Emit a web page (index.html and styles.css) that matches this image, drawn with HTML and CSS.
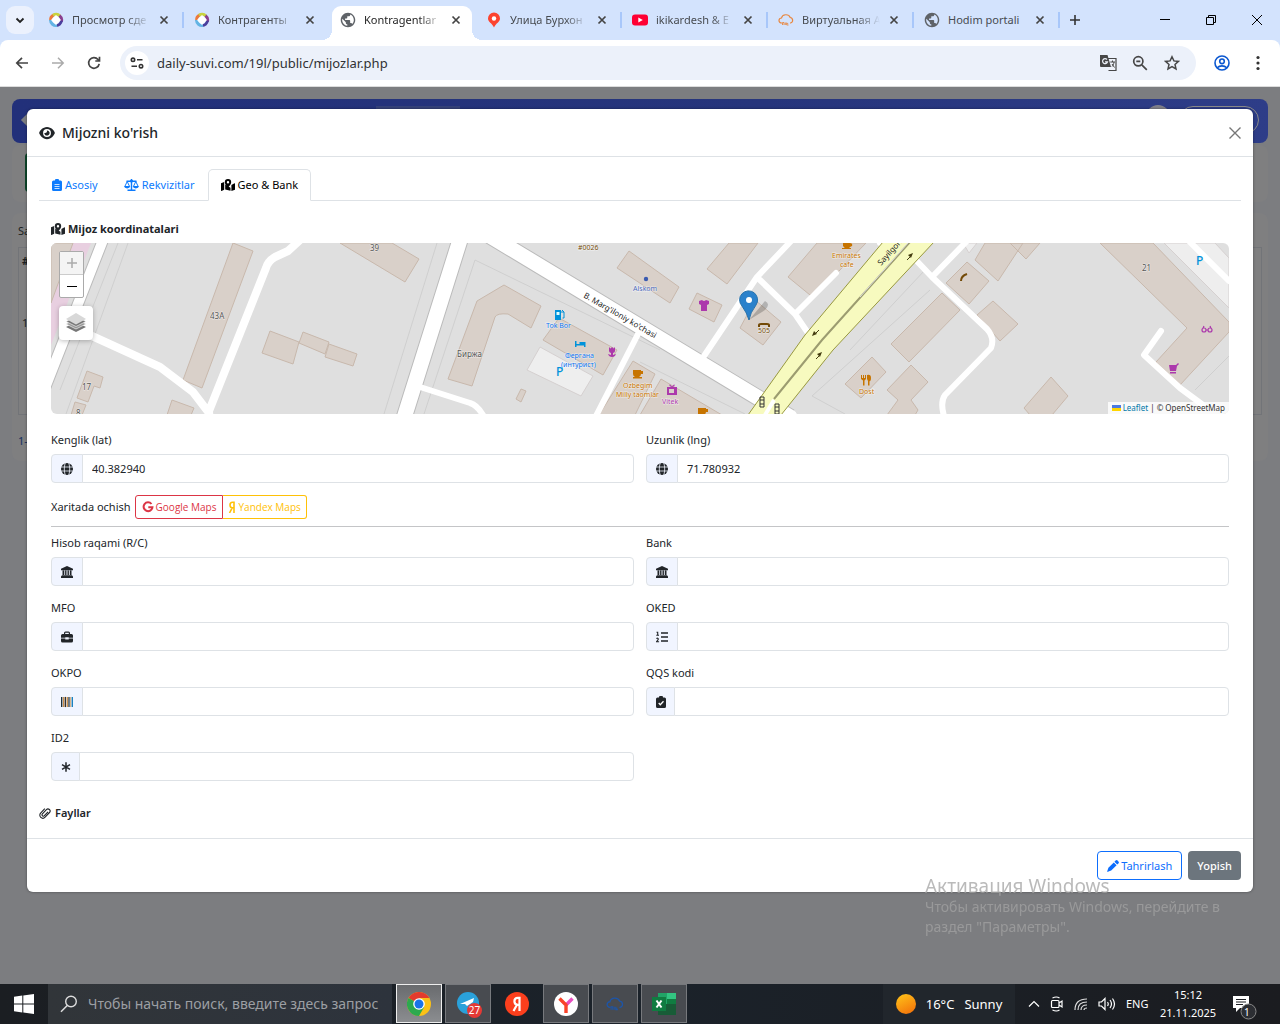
FILE: index.html
```html
<!DOCTYPE html>
<html lang="uz">
<head>
<meta charset="utf-8">
<meta name="viewport" content="width=device-width, initial-scale=1">
<title>Kontragentlar</title>
<link rel="stylesheet" href="styles.css">
</head>
<body>
<svg class="sprite" aria-hidden="true">
  <symbol id="x" viewBox="0 0 10 10"><path d="M1.500 1.500l7 7m0-7l-7 7" stroke="currentColor" stroke-width="1.700" fill="none"/></symbol>
  <symbol id="ring" viewBox="0 0 16 16"><g fill="none" stroke-width="3"><path d="M2.600 8.500A5.600 5.600 0 0 1 6 2.800" stroke="#ec7a3c"/><path d="M5 3.300A5.600 5.600 0 0 1 12 4" stroke="#c8d23e"/><path d="M11.500 3.600A5.600 5.600 0 0 1 13.400 9.500" stroke="#8a3f8f"/><path d="M13.400 8.600A5.600 5.600 0 0 1 8 13.500" stroke="#4a3f9d"/><path d="M9 13.500A5.600 5.600 0 0 1 2.500 8" stroke="#63b4e4"/></g><path d="M8 3L13 8 8 13 3 8z" fill="#fff"/></symbol>
  <symbol id="earth" viewBox="1 1 22 22"><path fill="#5f6368" d="M12 2C6.480 2 2 6.480 2 12s4.480 10 10 10 10-4.480 10-10S17.520 2 12 2zm-1 17.930c-3.950-.490-7-3.850-7-7.930 0-.620.080-1.210.210-1.790L9 15v1c0 1.100.900 2 2 2v1.930zm6.900-2.540c-.260-.810-1-1.390-1.900-1.390h-1v-3c0-.550-.450-1-1-1H8v-2h2c.550 0 1-.450 1-1V7h2c1.100 0 2-.900 2-2v-.410c2.930 1.190 5 4.060 5 7.410 0 2.080-.800 3.970-2.100 5.390z"/></symbol>
  <symbol id="mappin" viewBox="0 0 16 16"><path d="M8 .5a6 6 0 0 0-6 6C2 10 6 11 8 15.500 10 11 14 10 14 6.500a6 6 0 0 0-6-6z" fill="#fc432f"/><circle cx="8" cy="6.500" r="2.200" fill="#fff"/></symbol>
  <symbol id="yt" viewBox="0 0 16 16"><rect y="2.500" width="16" height="11" rx="3" fill="#f03"/><path d="M6.300 5.500v5L10.800 8z" fill="#fff"/></symbol>
  <symbol id="cloud" viewBox="0 0 16 16"><path d="M4 11H3.500a2.500 2.500 0 0 1 0-5 4.500 4 0 0 1 8.700-.5 2.800 2.800 0 0 1 .3 5.500H12" stroke="currentColor" stroke-width="1.200" fill="none"/><path d="M4.500 13v-2.500h1.500v2.500M7.300 13v-2.500M8.700 10.500v2.500h1.800M8.700 11.700h1.500" stroke="currentColor" stroke-width=".9" fill="none"/></symbol>
  <symbol id="eye" viewBox="0 0 576 512"><path fill="currentColor" d="M288 32c-80.800 0-145.500 36.800-192.600 80.600C48.600 156 17.300 208 2.500 243.700c-3.300 7.900-3.300 16.700 0 24.600C17.300 304 48.600 356 95.400 399.400C142.500 443.200 207.200 480 288 480s145.500-36.800 192.600-80.600c46.800-43.500 78.100-95.400 93-131.100c3.300-7.900 3.300-16.700 0-24.600c-14.900-35.700-46.200-87.700-93-131.100C433.500 68.800 368.800 32 288 32zM144 256a144 144 0 1 1 288 0 144 144 0 1 1 -288 0zm144-64c0 35.300-28.700 64-64 64c-7.100 0-13.900-1.200-20.300-3.300c-5.500-1.800-11.900 1.600-11.700 7.400c.3 6.900 1.300 13.800 3.200 20.700c13.700 51.200 66.400 81.600 117.600 67.900s81.600-66.400 67.900-117.600c-11.100-41.500-47.800-69.400-88.600-71.100c-5.800-.2-9.200 6.100-7.400 11.700c2.100 6.400 3.300 13.200 3.300 20.300z"/></symbol>
  <symbol id="clip" viewBox="0 0 10 12"><path fill="currentColor" fill-rule="evenodd" d="M1.500 1.500H3a2 2 0 0 1 4 0h1.500A1.500 1.500 0 0 1 10 3v7.500A1.500 1.500 0 0 1 8.500 12h-7A1.500 1.500 0 0 1 0 10.500V3a1.500 1.500 0 0 1 1.500-1.500zM2.500 5.300v.7h5v-.7zm0 2v.7h5v-.7zm0 2v.7h5v-.7z"/></symbol>
  <symbol id="clipcheck" viewBox="0 0 10 12"><path fill="currentColor" d="M1.500 1.500H3a2 2 0 0 1 4 0h1.500A1.500 1.500 0 0 1 10 3v7.500A1.500 1.500 0 0 1 8.500 12h-7A1.500 1.500 0 0 1 0 10.500V3a1.500 1.500 0 0 1 1.500-1.500z"/><path d="M2.700 7l1.600 1.700L7.500 5.300" fill="none" stroke="#fff" stroke-width="1.300"/></symbol>
  <symbol id="scale" viewBox="0 0 15 12"><path d="M7.500 0v11M2.500 2.200h10M3.500 11.200h8" stroke="currentColor" stroke-width="1.400" fill="none"/><path d="M3.200 2.500L.8 7.500h4.800zM11.800 2.500L9.400 7.500h4.800z" fill="none" stroke="currentColor"/><path d="M0 7.300h6.300a3.200 2.600 0 0 1-6.300 0zM8.700 7.300H15a3.200 2.600 0 0 1-6.300 0z" fill="currentColor"/><circle cx="7.500" cy="2" r="1.600" fill="currentColor"/></symbol>
  <symbol id="maploc" viewBox="0 0 14 12"><path fill="currentColor" d="M0 4.200L3.200 2.900v7.800L.5 12 0 11.700zM4.200 5.500l5.300 3.200v3.100L4.200 10.500zM10.400 6l3.100-1.700.5.300v6.200L10.400 12z"/><path fill="currentColor" fill-rule="evenodd" d="M7 0a3.200 3.200 0 0 0-3.200 3.200C3.800 5 6 7.500 7 8.600c1-1.100 3.200-3.600 3.200-5.400A3.200 3.200 0 0 0 7 0zm0 2a1.200 1.200 0 1 1 0 2.400A1.200 1.200 0 0 1 7 2z"/></symbol>
  <symbol id="globe" viewBox="0 0 12 12"><circle cx="6" cy="6" r="6" fill="currentColor"/><path d="M0 4h12M0 8h12M4.200 0C3 4 3 8 4.200 12M7.800 0C9 4 9 8 7.800 12" stroke="#eff3fd" stroke-width=".8" fill="none"/></symbol>
  <symbol id="bank" viewBox="0 0 12 12"><path fill="currentColor" d="M6 0l6 2.800v1.400H0V2.800zM1.500 4.500h1.800V9H1.500zm2.600 0h1.400V9H4.100zm2.400 0h1.400V9H6.500zm2.300 0h1.700V9H8.800zM1 9.200h10l1 1.300V12H0v-1.500z"/></symbol>
  <symbol id="case" viewBox="0 0 12 12"><path fill="currentColor" fill-rule="evenodd" d="M3 3V2a1.500 1.500 0 0 1 1.500-1.500h3A1.500 1.500 0 0 1 9 2v1h1.500A1.500 1.500 0 0 1 12 4.500V6.800H7.700V6.300H4.300v.5H0V4.500A1.500 1.500 0 0 1 1.500 3zm1.200 0h3.600V1.700H4.200zM0 7.400h4.300v1h3.400v-1H12V10a1.500 1.500 0 0 1-1.500 1.500h-9A1.500 1.500 0 0 1 0 10z"/></symbol>
  <symbol id="listol" viewBox="0 0 12 12"><path d="M5 2h7M5 6h7M5 10h7" stroke="currentColor" stroke-width="1.300"/><path d="M.5 1.200h1.200v3M.3 4.200h2.700M.4 7.600c1.200-1 2.600.2 1.400 1.400L.6 10.700h2.500" fill="none" stroke="currentColor" stroke-width="1.100"/></symbol>
  <symbol id="barcode" viewBox="0 0 13 12"><path fill="#1d2f38" d="M0 .5h1.500v11H0zM8 .5h1.300v11H8z"/><path fill="#c8812f" d="M2.300.5h1.200v11H2.300zM6.200.5h1.200v11H6.200z"/><path fill="#333" d="M4 .5h1.500v11H4z"/><path fill="#d5a56a" d="M10 .5h1v11h-1z"/><path fill="#1a82c0" d="M11.500.5H13v11h-1.500z"/></symbol>
  <symbol id="aster" viewBox="0 0 12 12"><path d="M6 1.300v9.400M2 3.700l8 4.600M10 3.700L2 8.300" stroke="currentColor" stroke-width="1.500"/></symbol>
  <symbol id="paperclip" viewBox="0 0 12 12"><path d="M9 4.800L5.400 8.700a1.300 1.300 0 0 1-2-1.800l4-4.300a2.100 2.100 0 0 1 3.100 2.900L6.100 10.200a3 3 0 0 1-4.500-4.100L5.800 1.700" fill="none" stroke="currentColor" stroke-width="1.100"/></symbol>
  <symbol id="pencil" viewBox="0 0 12 12"><path fill="currentColor" d="M8.600.6a1.400 1.400 0 0 1 2 0l.8.800a1.400 1.400 0 0 1 0 2l-1.200 1.200-2.800-2.800zM6.800 2.400l2.800 2.800-5.400 5.400L0 12l1.400-4.200z"/></symbol>
  <symbol id="gmark" viewBox="0 0 12 12"><path d="M9.500 3A4.400 4.400 0 1 0 10.400 6.300H6.300" fill="none" stroke="currentColor" stroke-width="2"/></symbol>
  <symbol id="yamark" viewBox="0 0 8 12"><path d="M6 12V1.200H4.500a2.500 2.800 0 0 0 0 5.600H6M4.200 6.800L1.500 12" fill="none" stroke="currentColor" stroke-width="1.600"/></symbol>
</svg>

<header class="browser">
  <div class="tabstrip">
    <button class="tab-search" aria-label="Tabs"><svg viewBox="0 0 12 12" width="12" height="12"><path d="M2.500 4.500L6 8l3.500-3.500" stroke="#222" stroke-width="1.800" fill="none"/></svg></button>
    <div class="tab"><div class="tab-body"><svg class="fav"><use href="#ring"/></svg><span class="tab-title">Просмотр сде</span><button class="tab-close" aria-label="Close"><svg><use href="#x"/></svg></button></div></div>
    <div class="tab before-active"><div class="tab-body"><svg class="fav"><use href="#ring"/></svg><span class="tab-title">Контрагенты</span><button class="tab-close" aria-label="Close"><svg><use href="#x"/></svg></button></div></div>
    <div class="tab active"><div class="tab-body"><svg class="fav"><use href="#earth"/></svg><span class="tab-title">Kontragentlar</span><button class="tab-close" aria-label="Close"><svg><use href="#x"/></svg></button></div></div>
    <div class="tab"><div class="tab-body"><svg class="fav"><use href="#mappin"/></svg><span class="tab-title">Улица Бурхон</span><button class="tab-close" aria-label="Close"><svg><use href="#x"/></svg></button></div></div>
    <div class="tab"><div class="tab-body"><svg class="fav"><use href="#yt"/></svg><span class="tab-title">ikikardesh &amp; E</span><button class="tab-close" aria-label="Close"><svg><use href="#x"/></svg></button></div></div>
    <div class="tab"><div class="tab-body"><svg class="fav orange"><use href="#cloud"/></svg><span class="tab-title">Виртуальная А</span><button class="tab-close" aria-label="Close"><svg><use href="#x"/></svg></button></div></div>
    <div class="tab"><div class="tab-body"><svg class="fav"><use href="#earth"/></svg><span class="tab-title whole">Hodim portali</span><button class="tab-close" aria-label="Close"><svg><use href="#x"/></svg></button></div></div>
    <button class="new-tab" aria-label="New tab"><svg viewBox="0 0 12 12" width="12" height="12"><path d="M6 1v10M1 6h10" stroke="#333" stroke-width="1.600"/></svg></button>
    <div class="window-buttons">
      <button aria-label="Minimize"><svg viewBox="0 0 12 12" width="12" height="12"><path d="M1 5.500h10" stroke="#000"/></svg></button>
      <button aria-label="Restore"><svg viewBox="0 0 12 12" width="12" height="12"><path d="M1.500 3.500h7v7h-7zM3.500 3V1.500h7v7H9" stroke="#000" fill="none"/></svg></button>
      <button aria-label="Close window"><svg viewBox="0 0 12 12" width="12" height="12"><path d="M1 1l10 10M11 1L1 11" stroke="#000"/></svg></button>
    </div>
  </div>
  <div class="toolbar">
    <button class="nav" aria-label="Back"><svg viewBox="0 0 14 14" width="14" height="14"><path d="M13 7H2M7 1.800L1.800 7 7 12.200" stroke="#444" stroke-width="1.700" fill="none"/></svg></button>
    <button class="nav" aria-label="Forward"><svg viewBox="0 0 14 14" width="14" height="14"><path d="M1 7h11M7 1.800L12.200 7 7 12.200" stroke="#aaa" stroke-width="1.500" fill="none"/></svg></button>
    <button class="nav" aria-label="Reload"><svg viewBox="0 0 14 14" width="14" height="14"><path d="M12.200 7.800A5.300 5.300 0 1 1 11 3.500L12.500 5M12.500.8V5H8.300" stroke="#444" stroke-width="1.700" fill="none"/></svg></button>
    <div class="omnibox">
      <button class="site-info" aria-label="Site"><svg viewBox="0 0 14 14" width="14" height="14"><g stroke="#333" stroke-width="1.600" fill="none"><circle cx="3" cy="3.800" r="1.700"/><path d="M7 3.800h5.500M1.500 10.200H7"/><circle cx="11" cy="10.200" r="1.700"/></g></svg></button>
      <input class="url" type="text" aria-label="Address" value="daily-suvi.com/19l/public/mijozlar.php">
      <button class="omni" aria-label="Translate"><svg viewBox="0 0 18 18" width="18" height="18"><path d="M8.500 4.500H17v12H9.500" fill="#eef2fa" stroke="#474747" stroke-width="1.200"/><path d="M1 1h7.500l3.500 12H2a1 1 0 0 1-1-1z" fill="#474747"/><path d="M8 5.500a2.500 2.500 0 1 0 .5 2.300H6" fill="none" stroke="#eef2fa" stroke-width="1.200"/><path d="M11.300 8H16M13.500 6.500V8M15 8c-.3 2.500-1 3.500-2 4.500M13 10l2.500 3.500" fill="none" stroke="#474747"/></svg></button>
      <button class="omni" aria-label="Zoom"><svg viewBox="0 0 16 16" width="16" height="16"><circle cx="6.300" cy="6.300" r="4.600" stroke="#474747" stroke-width="1.700" fill="none"/><path d="M9.800 9.800l5 5M4.300 6.300h4" stroke="#474747" stroke-width="1.700"/></svg></button>
      <button class="omni" aria-label="Bookmark"><svg viewBox="0 0 16 16" width="16" height="16"><path d="M8 1.800l1.900 4.100 4.500.5L11 9.400l1 4.500-4-2.300-4 2.300 1-4.500-3.400-3 4.500-.5z" stroke="#474747" stroke-width="1.500" fill="none"/></svg></button>
    </div>
    <button class="nav" aria-label="Profile"><svg viewBox="0 0 16 16" width="16" height="16"><g stroke="#0b57d0" stroke-width="1.600" fill="none"><circle cx="8" cy="8" r="7"/><circle cx="8" cy="6.300" r="2.300"/><path d="M3.200 12.800c2.500-2.600 7-2.600 9.600 0"/></g></svg></button>
    <button class="nav" aria-label="Menu"><svg viewBox="0 0 16 16" width="16" height="16"><g fill="#333"><circle cx="8" cy="2.500" r="1.600"/><circle cx="8" cy="8" r="1.600"/><circle cx="8" cy="13.500" r="1.600"/></g></svg></button>
  </div>
</header>

<main class="page">
  <div class="under" aria-hidden="true">
    <div class="under-bar"><span class="under-home"></span><span class="under-tab"></span><span class="under-avatar"></span><span class="under-pill"></span></div>
    <div class="under-card"><span class="under-green"></span></div>
    <div class="under-card list"><p>Sa</p><div class="under-table"><b>#</b><span>1</span></div><p class="pager">1-</p></div>
  </div>

  <section class="modal" role="dialog" aria-labelledby="dialog-title">
    <div class="modal-header">
      <svg class="i-eye"><use href="#eye"/></svg>
      <h1 id="dialog-title">Mijozni ko'rish</h1>
      <button class="modal-close" aria-label="Close"><svg viewBox="0 0 12 12" width="12" height="12"><path d="M.5.5l11 11M11.500.5l-11 11" stroke="#777" stroke-width="1.400"/></svg></button>
    </div>
    <div class="modal-body">
      <nav class="nav-tabs">
        <a href="#asosiy"><svg class="i10"><use href="#clip"/></svg>Asosiy</a>
        <a href="#rekvizitlar"><svg class="i15"><use href="#scale"/></svg>Rekvizitlar</a>
        <a href="#geo" class="active"><svg class="i14"><use href="#maploc"/></svg>Geo &amp; Bank</a>
      </nav>
      <div class="panel">
        <h2><svg class="i14"><use href="#maploc"/></svg>Mijoz koordinatalari</h2>
        <div class="map">
          <svg class="map-art" viewBox="51 243 1178 171" preserveAspectRatio="xMidYMid slice" role="img" aria-label="Xarita">
            <rect x="51" y="243" width="1178" height="171" fill="#dfdfdf"/>
            <path fill="#e8cfe0" d="M73 243h18L51 345v-42z"/>
            <g fill="none" stroke="#cfcfcf">
              <path d="M128 243L66 414M437 243L384 414M424 414L475 260 660 350M640 362L745 414M812 396L930 290M812 396L845 414M1229 356L1195 390M850 350L925 270M118 243L60 390"/>
            </g>
            <g fill="#d9d0c9" stroke="#c8b8ac">
              <path d="M51 243H73L51 303zM233 243L253 251 202 388 183 380zM270 331L299 342 293 364 262 353zM303 332L329 342 325 354 299 343zM329 344L357 354 353 366 325 357zM87 371L103 377 100 388 94 386 88 402 77 398zM75 402L86 405 82 415H71zM172 400L194 408 191 415H167zM340 243H392L419 259 405 282z"/>
              <path d="M504 285L541 306 531 328 508 314Q497 313 495 317L472 386 448 379 477 301zM559 318L617 350 603 375 543 340zM633 361L655 374 635 415H599zM521 389L526 391 521 402 516 399zM629 251L679 287 670 303 617 268zM661 379L722 415H640z"/>
              <path d="M729 243H758L727 284 707 269zM697 293L722 305 714 322 689 309zM755 300L781 322 763 345 740 328zM817 243H866L838 272 810 295 788 277zM942 293L960 310 909 362 891 344zM872 357L886 372 861 398 845 384zM911 365L928 382 911 400 918 410 915 415H887L898 400 887 390zM967 262L989 281 969 304 946 283zM985 243H1023L998 281 975 260zM1010 243H1040L1026 259zM993 301L1018 324 1000 341 977 315zM1051 377L1068 396 1052 415H1030L1024 408zM1100 243H1153L1229 322V332L1180 385 1156 362 1187 328z"/>
            </g>
            <path fill="#eee" stroke="#d5d0d0" d="M540 347L593 376 581 396 527 370zM1164 243H1215L1229 258V308zM963 243h14l-8 10z"/>
            <g fill="none" stroke="#bbb" stroke-linejoin="round">
              <path stroke-width="12" d="M103 240L45 388"/><path stroke-width="17" d="M460 240L404 418M490 236L790 417"/>
            </g>
            <g fill="none" stroke="#fff" stroke-linejoin="round" stroke-linecap="round">
              <path stroke-width="10" d="M103 240L45 388"/>
              <path stroke-width="8" d="M300 240L288 251 275 257Q268 261 266 268L209 411M92 336L160 367 193 392 209 413"/>
              <path stroke-width="15" d="M460 240L404 418M490 236L790 417"/>
              <path stroke-width="6" d="M420 387L470 403Q477 405 483 415M1188 240L1229 281"/>
              <path stroke-width="6" d="M638 334L595 418M792 240L757 277 704 356M760 280L795 314 808 333M796 313L836 273M880 243L890 250M912 256L932 277 987 329Q995 338 991 348L945 395Q940 402 944 416M967 241L932 277M1161 331L1144 355 1180 388 1203 405"/>
            </g>
            <path fill="#f7fabf" stroke="#98983f" d="M883 242L805 335 748 415H781L833 350 934 242z"/>
            <path fill="none" stroke="#9c9c70" stroke-width="2" d="M910 242L822 340 774 399"/>
            <path fill="none" stroke="#ddd" d="M908 243L860 297"/>
            <path fill="none" stroke="#fff" stroke-width="4" d="M774 400L765 415"/>
            <g fill="#443c10" stroke="#443c10"><path d="M819 330l-4 4"/><path stroke="none" d="M812 336l2-5 3 3z"/><path d="M816 359l4-4"/><path stroke="none" d="M822 352l-2 5-3-3z"/><path d="M907 260l4-4"/><path stroke="none" d="M913 253l-2 5-3-3z"/></g>
            <g fill="none" stroke="#333"><path d="M760 397h4v10h-4zM760 400h4M760 404h4M775 404h4v10h-4zM775 407h4M775 411h4"/></g>
            <g class="halo"><text x="210" y="319">43A</text><text x="82" y="390">17</text><text x="76" y="416">8</text><text x="370" y="251">39</text><text x="457" y="357">Биржа</text><text x="1142" y="271">21</text></g>
            <text class="street" transform="translate(583 297) rotate(30)">B. Marg'iloniy ko'chasi</text>
            <text class="street" transform="translate(881 266) rotate(-48)">Sayilgoh</text>
            <g class="halo brown"><text x="578" y="250">#0026</text><text x="758" y="333">505</text></g>
            <g class="halo blue"><text x="546" y="328">Tok Bor</text><text x="565" y="358">Фергана</text><text x="561" y="367">(интурист)</text></g>
            <g class="halo navy"><text x="633" y="291">Alskom</text></g>
            <g class="halo amber"><text x="832" y="258">Emirates</text><text x="840" y="267">cafe</text><text x="623" y="388">Ozbegim</text><text x="616" y="397">Milly taomlar</text><text x="859" y="394">Dost</text></g>
            <g class="halo violet"><text x="662" y="404">Vitek</text></g>
            <g class="parking"><text x="556" y="376">P</text><text x="1196" y="265">P</text></g>
            <circle cx="646" cy="279" r="2.200" fill="#3b5bb0"/>
            <path fill="#0092da" d="M555 310h6v10h-6zM575 341h1.500v3h3v-2h6v5h-1.500v-1.500h-7.500V347H575z"/><path d="M561 312h3v6h-1.500M562 310l2 2" stroke="#0092da" fill="none"/><path fill="#dff" d="M556.500 312h3v3h-3z"/>
            <g fill="#ac39ac"><path d="M699 301l3-1q2 2 4 0l3 1v3l-2 1v6h-6v-6l-2-1z"/><path d="M609 347l1.500 1.500L612 347l1.500 1.500L615 347v4q0 1.500-2 2v2l3-1q-1 3-4 3t-4-3l3 1v-2q-2-.5-2-2z"/><path fill-rule="evenodd" d="M667 387h4l-2-2 1-.5 2 2 2-2 1 .5-2 2h4v8h-10zm2 2v4h5v-4z"/><path d="M1169 365h7l2-2 1 1-2 2-1 5h-6zM1170 372h6v1.500h-6z"/></g>
            <path fill="none" stroke="#ac39ac" stroke-width="1.200" d="M1202 330a2 2 0 1 0 4 0 2 2 0 1 0-4 0M1208 330a2 2 0 1 0 4 0 2 2 0 1 0-4 0M1206 330h2M1203 328l1-2M1211 328l-1-2"/>
            <g fill="#c77400"><path d="M843 243h7q3 0 2 3l-2 1q-1 2-3 2t-4-3zM842 248h9v1h-9zM633 370h8v1h2v3h-2q0 2-2 3h-4q-2-1-2-3zM633 377h9v1.500h-9zM698 408h8v1h2v3h-2l-1 3h-7z"/><path d="M861 375h1v3h1v-3h1v3h1v-3h1v4l-1.500 1.500v5h-1.500v-5L861 379zM867 375q4-1 4 3t-1.500 3v4.500H868V381q-1.500-2-1-6z"/></g>
            <path d="M759 327v-2q0-1 2-1h6q2 0 2 1v2M961 281q0-5 6-7" fill="none" stroke="#734a08" stroke-width="2"/>
            <path d="M749 320L765 301Q771 304 765 310z" fill="#000" opacity=".2"/>
            <path d="M749 320Q747 313 742 306a9 9 0 1 1 14-1Q750 313 749 320z" fill="#2a81cb" stroke="#2872ab"/><circle cx="749" cy="300" r="3" fill="#fff"/>
          </svg>
          <div class="map-controls">
            <div class="zoomers"><button disabled aria-label="Zoom in"><svg viewBox="0 0 12 12" width="12" height="12"><path d="M6 1v10M1 6h10" stroke="#aaa" stroke-width="1.500"/></svg></button><button aria-label="Zoom out"><svg viewBox="0 0 12 12" width="12" height="12"><path d="M1 6.500h10" stroke="#000"/></svg></button></div>
            <button class="layers" aria-label="Layers"><svg viewBox="0 0 24 24" width="24" height="24"><path d="M2 16l10 5 10-5-10-5z" fill="#777"/><path d="M2 13l10 5 10-5-10-5z" fill="#999" stroke="#fff" stroke-width=".6"/><path d="M2 10.500l10 5 10-5-10-5z" fill="#777" stroke="#fff" stroke-width=".6"/><path d="M2 8l10 5.500L22 8 12 2z" fill="#d8d8d8"/></svg></button>
          </div>
          <div class="attribution"><svg viewBox="0 0 12 8" width="9" height="6"><path fill="#4c7be1" d="M0 0h12v4H0z"/><path fill="#ffd500" d="M0 4h12v4H0z"/></svg> <a href="#leaflet">Leaflet</a> | © OpenStreetMap</div>
        </div>

        <div class="grid first">
          <div class="field"><label for="lat">Kenglik (lat)</label><div class="group"><span class="addon"><svg><use href="#globe"/></svg></span><input id="lat" type="text" value="40.382940"></div></div>
          <div class="field"><label for="lng">Uzunlik (lng)</label><div class="group"><span class="addon"><svg><use href="#globe"/></svg></span><input id="lng" type="text" value="71.780932"></div></div>
        </div>
        <div class="open-map"><span>Xaritada ochish</span><div class="btn-group"><a class="google" href="#google"><svg class="i12"><use href="#gmark"/></svg>Google Maps</a><a class="yandex" href="#yandex"><svg class="i8"><use href="#yamark"/></svg>Yandex Maps</a></div></div>
        <hr>
        <div class="grid">
          <div class="field"><label for="rc">Hisob raqami (R/C)</label><div class="group"><span class="addon"><svg><use href="#bank"/></svg></span><input id="rc" type="text"></div></div>
          <div class="field"><label for="bankname">Bank</label><div class="group"><span class="addon"><svg><use href="#bank"/></svg></span><input id="bankname" type="text"></div></div>
          <div class="field"><label for="mfo">MFO</label><div class="group"><span class="addon"><svg><use href="#case"/></svg></span><input id="mfo" type="text"></div></div>
          <div class="field"><label for="oked">OKED</label><div class="group"><span class="addon"><svg><use href="#listol"/></svg></span><input id="oked" type="text"></div></div>
          <div class="field"><label for="okpo">OKPO</label><div class="group"><span class="addon"><svg><use href="#barcode"/></svg></span><input id="okpo" type="text"></div></div>
          <div class="field"><label for="qqs">QQS kodi</label><div class="group"><span class="addon narrow"><svg><use href="#clipcheck"/></svg></span><input id="qqs" type="text"></div></div>
          <div class="field"><label for="id2">ID2</label><div class="group"><span class="addon narrow"><svg><use href="#aster"/></svg></span><input id="id2" type="text"></div></div>
        </div>
      </div>
      <h3><svg class="i12"><use href="#paperclip"/></svg>Fayllar</h3>
    </div>
    <div class="modal-footer">
      <button class="btn-edit"><svg class="i12"><use href="#pencil"/></svg>Tahrirlash</button>
      <button class="btn-close">Yopish</button>
    </div>
  </section>
  <div class="watermark"><strong>Активация Windows</strong><span>Чтобы активировать Windows, перейдите в<br>раздел "Параметры".</span></div>
</main>

<footer class="taskbar">
  <button class="start" aria-label="Start"><svg viewBox="0 0 20 20" width="20" height="20"><path fill="#fff" d="M0 2.800l8.300-1.200v7.900H0zM9.300 1.400L20 0v9.500H9.300zM0 10.500h8.300v7.900L0 17.200zM9.300 10.500H20V20L9.300 18.600z"/></svg></button>
  <label class="search"><svg viewBox="0 0 18 18" width="18" height="18"><circle cx="11" cy="6.500" r="5.300" fill="none" stroke="#ddd" stroke-width="1.400"/><path d="M7.200 10.500L1 16.800" stroke="#ddd" stroke-width="1.500"/></svg><input type="text" aria-label="Поиск" placeholder="Чтобы начать поиск, введите здесь запрос"></label>
  <div class="apps">
    <button class="app current" aria-label="Chrome"><svg viewBox="0 0 24 24" width="24" height="24"><circle cx="12" cy="12" r="12" fill="#fbc116"/><path d="M12 12L1.600 6A12 12 0 0 1 22.400 6z" fill="#e33b2e"/><path d="M12 12L1.600 6A12 12 0 0 0 12 24l5.200-9z" fill="#2da94f"/><path d="M12 6h10.400L17.200 15z" fill="#fbc116"/><circle cx="12" cy="12" r="5.800" fill="#fff"/><circle cx="12" cy="12" r="4.500" fill="#1a73e8"/></svg></button>
    <button class="app open" aria-label="Telegram"><svg viewBox="0 0 24 24" width="24" height="24"><circle cx="12" cy="11" r="11" fill="#2aa1da"/><path d="M4 12L18 6l-1 4-6 4-2-2z" fill="#fff"/></svg><span class="count">27</span></button>
    <button class="app" aria-label="Yandex"><svg viewBox="0 0 24 24" width="24" height="24"><circle cx="12" cy="12" r="12" fill="#fc3f1d"/><path d="M14.500 19V5.800H12.800c-4.500 0-4.500 7 0 7h1.700M12 12.800L8.500 19" fill="none" stroke="#fff" stroke-width="2.200"/></svg></button>
    <button class="app open" aria-label="Yandex Browser"><svg viewBox="0 0 24 24" width="24" height="24"><circle cx="12" cy="12" r="12" fill="#fff"/><path d="M12 13l6.500-6.500" stroke="#e84fc0" stroke-width="3.400"/><path d="M12 21v-8L5.500 6.500" fill="none" stroke="#f9432a" stroke-width="3.400"/></svg></button>
    <button class="app open" aria-label="Cloud"><svg class="blue-cloud" width="18" height="18"><use href="#cloud"/></svg></button>
    <button class="app open" aria-label="Excel"><svg viewBox="0 0 24 24" width="24" height="24"><path fill="#21a366" d="M6 1h9v11H6z"/><path fill="#33c481" d="M15 1h9v6h-9z"/><path fill="#107c41" d="M15 7h9v5h-9z"/><path fill="#185c37" d="M6 12h18v11H6z"/><path fill="#107c41" d="M0 5h14v14H0z"/><path d="M4.500 8.500l5 7M9.500 8.500l-5 7" stroke="#fff" stroke-width="2"/></svg></button>
  </div>
  <button class="weather"><svg viewBox="0 0 20 20" width="20" height="20"><defs><linearGradient id="sun" x1="0" y1="0" x2=".5" y2="1"><stop stop-color="#ffc61a"/><stop offset="1" stop-color="#f47b0c"/></linearGradient></defs><circle cx="10" cy="10" r="10" fill="url(#sun)"/></svg><span>16°C</span><span>Sunny</span></button>
  <div class="tray">
    <svg viewBox="0 0 12 12" width="12" height="12"><path d="M1 8.500l5-5 5 5" fill="none" stroke="#fff" stroke-width="1.200"/></svg>
    <svg viewBox="0 0 14 16" width="14" height="16"><g fill="none" stroke="#fff" stroke-width="1.200"><rect x="1.500" y="4.500" width="7.500" height="7" rx="1"/><path d="M9 7l3-2v6L9 9M2.500 2q4-2 7 0M2.500 14q4 2 7 0"/></g></svg>
    <svg viewBox="0 0 14 14" width="14" height="14"><g fill="none" stroke="#ddd" stroke-width="1.200"><path d="M1 13Q1 2 13 2M4 13q0-8 9-8M7 13q0-5 6-5"/><path d="M10 13q0-2 3-2"/></g></svg>
    <svg viewBox="0 0 18 14" width="18" height="14"><g fill="none" stroke="#fff" stroke-width="1.200"><path d="M1 5h2.500L7 1.500v11L3.500 9H1zM9.500 5q1.500 2 0 4M12 3q3 4 0 8M14.500 1.500q4 5.500 0 11"/></g></svg>
    <span>ENG</span>
  </div>
  <div class="clock"><span>15:12</span><span>21.11.2025</span></div>
  <button class="notes" aria-label="Notifications"><svg viewBox="0 0 26 26" width="26" height="26"><path fill="#fff" d="M1 2h16v12H8l-4 4v-4H1z"/><path d="M4 5.500h10M4 8h10M4 10.500h7" stroke="#1c1e22"/><circle cx="16.500" cy="17.500" r="7.500" fill="#2c2e33" stroke="#888"/></svg><span>1</span></button>
</footer>
</body>
</html>
```
FILE: styles.css
```css
* { box-sizing: border-box; }
body { margin: 0; min-height: 100vh; display: flex; flex-direction: column; font: 11px/20px "Noto Sans", "Open Sans", sans-serif; color: #212529; background: #7c7d80; }
button, input { font: inherit; color: inherit; }
button { padding: 0; border: 0; background: none; display: flex; align-items: center; justify-content: center; }
a { text-decoration: none; }
h1, h2, h3, p { margin: 0; }
.sprite { display: none; }

/* browser frame */
.browser { background: #d3e3fd; }
.tabstrip { display: flex; height: 40px; align-items: flex-start; }
.tab-search { width: 28px; height: 28px; margin: 6px 4px 0 6px; border-radius: 9px; background: #ebf1fd; flex: none; }
.tab { flex: 0 1 146px; min-width: 0; height: 40px; padding: 6px 4px 0 2px; position: relative; }
.tab::after { content: ""; position: absolute; right: 0; top: 12px; width: 2px; height: 16px; background: #a8c7fa; }
.tab.before-active::after { display: none; }
.tab-body { height: 34px; display: flex; align-items: center; padding: 0 11px 6px 8px; }
.fav { width: 16px; height: 16px; flex: none; }
.orange { color: #e8873f; }
.tab-title { flex: 1; margin: 0 2px 0 8px; white-space: nowrap; color: #474b50; -webkit-mask-image: linear-gradient(to right, #000 55px, transparent 78px); mask-image: linear-gradient(to right, #000 55px, transparent 78px); }
.tab-title.whole { -webkit-mask-image: none; mask-image: none; }
.tab-close { width: 10px; height: 10px; color: #444; }
.tab-close svg { width: 10px; height: 10px; }
.active .tab-body { background: #fff; border-radius: 9px 9px 0 0; position: relative; }
.tab.active::after { display: none; }
.active .tab-title { color: #1f1f1f; }
.active .tab-body::before, .active .tab-body::after { content: ""; position: absolute; bottom: 0; width: 10px; height: 10px; }
.active .tab-body::before { right: 100%; background: radial-gradient(circle at 0 0, transparent 10px, #fff 10px); }
.active .tab-body::after { left: 100%; background: radial-gradient(circle at 100% 0, transparent 10px, #fff 10px); }
.new-tab { width: 30px; height: 40px; flex: none; }
.window-buttons { margin-left: auto; display: flex; }
.window-buttons button { width: 46px; height: 40px; }
.toolbar { height: 47px; background: #fff; border-radius: 8px 8px 0 0; border-bottom: 1px solid #dcdcdc; display: flex; align-items: center; padding: 0 4px; }
.nav { width: 36px; height: 34px; flex: none; }
.omnibox { flex: 1; height: 34px; border-radius: 17px; background: #ecf1fa; display: flex; align-items: center; margin: 0 8px; padding: 0 8px 0 5px; }
.site-info { width: 24px; height: 24px; border-radius: 12px; background: #fff; }
.url { flex: 1; min-width: 0; border: 0; background: none; padding: 0 0 0 8px; font-size: 13px; color: #303134; }
.omni { width: 32px; height: 32px; }

/* dimmed page below the dialog */
.page { flex: 1; position: relative; padding: 22px 27px 92px; }
.under { position: absolute; inset: 12px 12px auto; color: #1c1f22; }
.under-bar { height: 44px; border-radius: 8px; background: linear-gradient(90deg, #22307a, #26357c 60%, #2e3d88); position: relative; }
.under-home { position: absolute; left: 11px; top: 16px; width: 10px; height: 10px; background: #7c7d80; transform: rotate(45deg); }
.under-tab { position: absolute; left: 29%; top: 7px; width: 84px; height: 4px; background: #35427a; }
.under-avatar { position: absolute; right: 98px; top: 6px; width: 24px; height: 24px; border-radius: 12px; background: #80808a; }
.under-pill { position: absolute; right: 9px; top: 7px; width: 80px; height: 28px; border-radius: 14px; border: 1px solid #8a8a8a; }
.under-card { height: 57px; margin-top: 2px; border-radius: 8px; background: #7f7f80; padding: 8px 13px; }
.under-green { display: block; width: 60px; height: 39px; border-radius: 4px; background: #0c4529; }
.under-card.list { height: 248px; margin-top: 11px; padding: 8px 6px; }
.under-table { height: 168px; margin: 6px 0; border: 1px solid #727478; padding: 3px; display: flex; flex-direction: column; gap: 42px; }
.pager { color: #16305f; padding-top: 10px; }

/* dialog */
.modal { position: relative; background: #fff; border-radius: 6px; box-shadow: 0 0 3px #0006; }
.modal-header { height: 48px; padding: 0 12px; display: flex; align-items: center; border-bottom: 1px solid #dee2e6; }
.i-eye { width: 16px; height: 14px; margin-right: 7px; }
h1 { flex: 1; font-size: 14px; font-weight: 500; }
.modal-body { padding: 12px 12px 15px; }
.nav-tabs { display: flex; height: 32px; border-bottom: 1px solid #dee2e6; }
.nav-tabs a { display: flex; align-items: center; gap: 3px; padding: 0 12px; height: 32px; color: #0d7bfd; border: 1px solid transparent; border-radius: 5px 5px 0 0; white-space: nowrap; }
.nav-tabs a.active { color: #000; background: #fff; border-color: #dee2e6 #dee2e6 #fff; }
.i8 { width: 8px; height: 12px; } .i10 { width: 10px; height: 12px; } .i12 { width: 12px; height: 12px; } .i14 { width: 14px; height: 12px; } .i15 { width: 15px; height: 12px; }
.panel { padding: 18px 12px 22px; }
h2 { display: flex; align-items: center; gap: 3px; font-size: 11px; font-weight: 700; margin-bottom: 4px; }
.map { position: relative; height: 171px; border-radius: 6px; overflow: hidden; }
.map-art { display: block; width: 100%; height: 100%; font: 8px "Noto Sans", sans-serif; }
.halo { fill: #555; stroke: #ffffff99; stroke-width: 1px; paint-order: stroke; }
.halo.brown { fill: #734a08; font-size: 7px; } .halo.blue { fill: #0a72f0; font-size: 7px; } .halo.navy { fill: #4a68b8; font-size: 7px; } .halo.amber { fill: #c77400; font-size: 7px; } .halo.violet { fill: #ac39ac; font-size: 7px; }
.street { fill: #222; }
.parking { fill: #0092da; font-size: 12px; font-weight: 500; }
.map-controls { position: absolute; left: 8px; top: 8px; }
.zoomers { width: 25px; border-radius: 2px; border: 1px solid #aaa; background: #fff; }
.zoomers button { width: 23px; height: 22px; }
.zoomers button:first-child { height: 23px; background: #f4f4f4; border-bottom: 1px solid #ccc; }
.layers { width: 34px; height: 34px; margin-top: 8px; border-radius: 4px; background: #fff; box-shadow: 0 1px 5px #0004; }
.attribution { position: absolute; right: 0; bottom: 0; padding: 0 4px; background: #fffc; font-size: 8px; line-height: 12px; color: #333; }
.attribution a { color: #0078a8; }
.grid { display: grid; grid-template-columns: 1fr 1fr; gap: 12px; }
.grid.first { margin-top: 16px; }
.field label { display: block; margin-bottom: 4px; }
.group { display: flex; height: 29px; }
.addon { width: 32px; flex: none; display: flex; align-items: center; justify-content: center; background: #f1f5ff; border: 1px solid #dee2e6; border-radius: 4px 0 0 4px; }
.addon svg { width: 12px; height: 12px; }
.addon.narrow { width: 29px; }
.group input { flex: 1; min-width: 0; margin-left: -1px; border: 1px solid #dee2e6; border-radius: 0 4px 4px 0; padding: 0 9px; background: #fff; outline: 0; }
.open-map { display: flex; align-items: center; gap: 4px; margin-top: 12px; height: 24px; }
.btn-group { display: flex; font-family: "Open Sans", sans-serif; }
.btn-group a { display: flex; align-items: center; gap: 2px; height: 24px; padding: 0 5px; font-size: 10px; border: 1px solid; }
.btn-group .google { color: #dc3545; border-radius: 3px 0 0 3px; padding: 0 6px; }
.btn-group .yandex { color: #ffc107; border-radius: 0 3px 3px 0; border-left: 0; }
hr { border: 0; height: 1px; background: #c4c5c7; margin: 7px 0 6px; }
h3 { display: flex; align-items: center; gap: 4px; font-size: 11px; font-weight: 600; }
.modal-footer { border-top: 1px solid #dee2e6; padding: 12px; display: flex; justify-content: flex-end; gap: 6px; }
.btn-edit, .btn-close { height: 29px; padding: 0 9px; border-radius: 4px; }
.btn-edit { border: 1px solid #0d6efd; color: #0d6efd; gap: 2px; background: #fff; }
.btn-close { background: #6c757d; color: #fff; font-weight: 500; }
.watermark { position: absolute; right: 20px; top: 788px; width: 335px; color: #a3a3a3; opacity: .75; pointer-events: none; }
.watermark strong { display: block; font-size: 19px; font-weight: 400; line-height: 22px; }
.watermark span { display: block; font-size: 14px; }

/* taskbar */
.taskbar { height: 40px; display: flex; background: linear-gradient(90deg, #1b1e22, #1b222a 50%, #1b1c20); color: #fff; }
.start { width: 48px; }
.search { width: 344px; background: linear-gradient(90deg, #313539, #2d333c); display: flex; align-items: center; padding: 0 0 0 12px; gap: 10px; }
.search input { flex: 1; min-width: 0; border: 0; padding: 0; background: none; font-size: 14px; outline: 0; }
.search input::placeholder { color: #9c9fa3; opacity: 1; }
.apps { display: flex; gap: 3px; margin-left: 4px; }
.app { width: 46px; height: 39px; position: relative; }
.app.open { background: #484b50; border: 1px solid #77797d; }
.app.current { background: linear-gradient(#696b6e, #8b8d90); border: 1px solid #eee; }
.count { position: absolute; left: 21px; top: 18px; width: 15px; height: 15px; border-radius: 8px; background: #e53935; font-size: 10px; line-height: 15px; text-align: center; }
.blue-cloud { color: #1d55a8; }
.weather { margin-left: auto; width: 132px; background: #21262c; gap: 10px; font-size: 13px; }
.tray { display: flex; align-items: center; gap: 10px; padding-left: 13px; width: 138px; }
.clock { width: 70px; display: flex; flex-direction: column; align-items: center; line-height: 18px; padding-top: 2px; }
.notes { width: 57px; position: relative; }
.notes svg { margin: 6px 14px 0 0; }
.notes span { position: absolute; left: 21px; top: 18px; font-size: 10px; }
```
